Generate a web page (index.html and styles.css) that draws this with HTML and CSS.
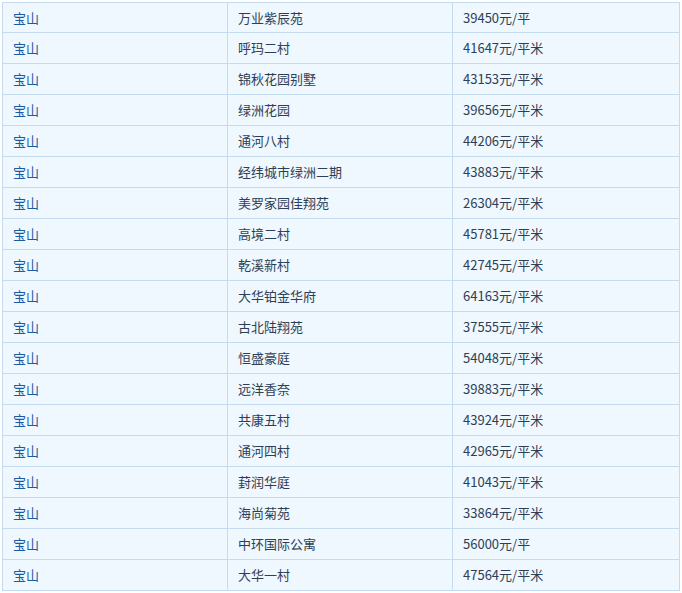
FILE: index.html
```html
<!DOCTYPE html>
<html lang="zh">
<head>
<meta charset="utf-8">
<link rel="stylesheet" href="styles.css">
</head>
<body>
<table class="price-table">
<colgroup><col class="c1"><col class="c2"><col class="c3"></colgroup>
<tbody>
<tr class="first"><td class="district">宝山</td><td>万业紫辰苑</td><td>39450元/平</td></tr>
<tr><td class="district">宝山</td><td>呼玛二村</td><td>41647元/平米</td></tr>
<tr><td class="district">宝山</td><td>锦秋花园别墅</td><td>43153元/平米</td></tr>
<tr><td class="district">宝山</td><td>绿洲花园</td><td>39656元/平米</td></tr>
<tr><td class="district">宝山</td><td>通河八村</td><td>44206元/平米</td></tr>
<tr><td class="district">宝山</td><td>经纬城市绿洲二期</td><td>43883元/平米</td></tr>
<tr><td class="district">宝山</td><td>美罗家园佳翔苑</td><td>26304元/平米</td></tr>
<tr><td class="district">宝山</td><td>高境二村</td><td>45781元/平米</td></tr>
<tr><td class="district">宝山</td><td>乾溪新村</td><td>42745元/平米</td></tr>
<tr><td class="district">宝山</td><td>大华铂金华府</td><td>64163元/平米</td></tr>
<tr><td class="district">宝山</td><td>古北陆翔苑</td><td>37555元/平米</td></tr>
<tr><td class="district">宝山</td><td>恒盛豪庭</td><td>54048元/平米</td></tr>
<tr><td class="district">宝山</td><td>远洋香奈</td><td>39883元/平米</td></tr>
<tr><td class="district">宝山</td><td>共康五村</td><td>43924元/平米</td></tr>
<tr><td class="district">宝山</td><td>通河四村</td><td>42965元/平米</td></tr>
<tr><td class="district">宝山</td><td>葑润华庭</td><td>41043元/平米</td></tr>
<tr><td class="district">宝山</td><td>海尚菊苑</td><td>33864元/平米</td></tr>
<tr><td class="district">宝山</td><td>中环国际公寓</td><td>56000元/平</td></tr>
<tr><td class="district">宝山</td><td>大华一村</td><td>47564元/平米</td></tr>
</tbody>
</table>
</body>
</html>
```
FILE: styles.css
```css
html, body {
  margin: 0;
  padding: 0;
  background: #ffffff;
}
body {
  padding: 2px 0 0 2px;
  font-family: "Noto Sans CJK SC", "Noto Sans", sans-serif;
  font-size: 13px;
}
.price-table {
  border-collapse: collapse;
  table-layout: fixed;
  width: 677px;
  background: #eff7ff;
}
.c1, .c2 { width: 225px; }
.c3 { width: 227px; }
.price-table td {
  border: 1px solid #c4daee;
  height: 30px;
  padding: 0 0 1px 10px;
  box-sizing: border-box;
  color: #2e3f55;
  line-height: 29px;
  white-space: nowrap;
}
.price-table .first td {
  height: 29px;
  padding-bottom: 0;
  line-height: 29px;
}
.price-table td.district {
  color: #1b5ba3;
}
```
